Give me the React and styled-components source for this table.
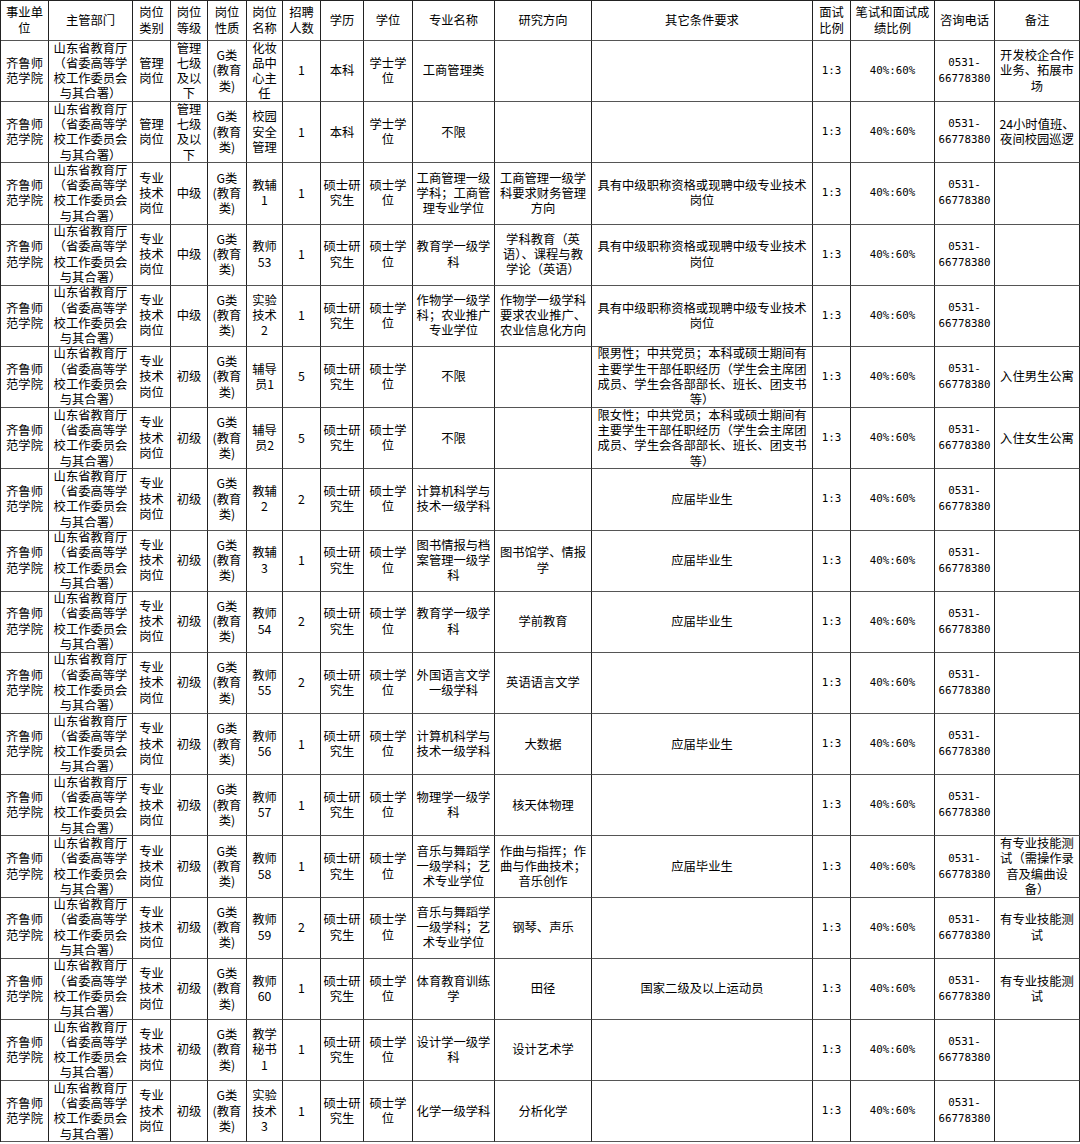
import React from 'react';
import styled, { createGlobalStyle, css } from 'styled-components';

const GlobalStyle = createGlobalStyle`
  html, body {
    margin: 0;
    padding: 0;
    background: #fff;
  }
`;

const Sheet = styled.div`
  width: 1080px;
  display: grid;
  grid-template-columns: 48px 84px 38px 37px 39px 36px 38px 43px 49px 82px 97px 221px 38px 84px 60px 85px;
  grid-template-rows: 40px;
  grid-auto-rows: 61.2px;
  border-top: 1px solid #222;
  border-left: 1px solid #222;
  font-family: "Noto Sans CJK SC", "Noto Sans", sans-serif;
  font-size: 12.3px;
  line-height: 15.3px;
  color: #000;
`;

const Cell = styled.div`
  box-sizing: border-box;
  display: flex;
  align-items: center;
  justify-content: center;
  text-align: center;
  white-space: pre-line;
  padding: 0 2px;
  border-right: 1px solid #222;
  border-bottom: 1px solid #555;
  overflow: visible;

  ${(props) => props.mono && css`
    padding: 0;
    font-family: "DejaVu Sans Mono", "Liberation Mono", monospace;
    font-size: 10.8px;
    line-height: 16px;
  `}
`;

const headers = [
  '事业单\n位', '主管部门', '岗位\n类别', '岗位\n等级', '岗位\n性质', '岗位\n名称', '招聘\n人数',
  '学历', '学位', '专业名称', '研究方向', '其它条件要求', '面试\n比例', '笔试和面试成\n绩比例', '咨询电话', '备注'
];

const UNIT = '齐鲁师\n范学院';
const DEPT = '山东省教育厅\n（省委高等学\n校工作委员会\n与其合署）';
const MGMT = '管理\n岗位';
const TECH = '专业\n技术\n岗位';
const SEVEN = '管理\n七级\n及以\n下';
const GTYPE = 'G类\n(教育\n类)';
const MASTER = '硕士研\n究生';
const MDEG = '硕士学\n位';
const PHONE = '0531-\n66778380';
const MID = '具有中级职称资格或现聘中级专业技术\n岗位';
const FRESH = '应届毕业生';

// level, name, count, degree, major, direction, other, note
const rows = [
  [MGMT, SEVEN, '化妆\n品中\n心主\n任', '1', '本科', '学士学\n位', '工商管理类', '', '', '开发校企合作\n业务、拓展市\n场'],
  [MGMT, SEVEN, '校园\n安全\n管理', '1', '本科', '学士学\n位', '不限', '', '', '24小时值班、\n夜间校园巡逻'],
  [TECH, '中级', '教辅\n1', '1', MASTER, MDEG, '工商管理一级\n学科；工商管\n理专业学位', '工商管理一级学\n科要求财务管理\n方向', MID, ''],
  [TECH, '中级', '教师\n53', '1', MASTER, MDEG, '教育学一级学\n科', '学科教育（英\n语）、课程与教\n学论（英语）', MID, ''],
  [TECH, '中级', '实验\n技术\n2', '1', MASTER, MDEG, '作物学一级学\n科；农业推广\n专业学位', '作物学一级学科\n要求农业推广、\n农业信息化方向', MID, ''],
  [TECH, '初级', '辅导\n员1', '5', MASTER, MDEG, '不限', '', '限男性；中共党员；本科或硕士期间有\n主要学生干部任职经历（学生会主席团\n成员、学生会各部部长、班长、团支书\n等）', '入住男生公寓'],
  [TECH, '初级', '辅导\n员2', '5', MASTER, MDEG, '不限', '', '限女性；中共党员；本科或硕士期间有\n主要学生干部任职经历（学生会主席团\n成员、学生会各部部长、班长、团支书\n等）', '入住女生公寓'],
  [TECH, '初级', '教辅\n2', '2', MASTER, MDEG, '计算机科学与\n技术一级学科', '', FRESH, ''],
  [TECH, '初级', '教辅\n3', '1', MASTER, MDEG, '图书情报与档\n案管理一级学\n科', '图书馆学、情报\n学', FRESH, ''],
  [TECH, '初级', '教师\n54', '2', MASTER, MDEG, '教育学一级学\n科', '学前教育', FRESH, ''],
  [TECH, '初级', '教师\n55', '2', MASTER, MDEG, '外国语言文学\n一级学科', '英语语言文学', '', ''],
  [TECH, '初级', '教师\n56', '1', MASTER, MDEG, '计算机科学与\n技术一级学科', '大数据', FRESH, ''],
  [TECH, '初级', '教师\n57', '1', MASTER, MDEG, '物理学一级学\n科', '核天体物理', '', ''],
  [TECH, '初级', '教师\n58', '1', MASTER, MDEG, '音乐与舞蹈学\n一级学科；艺\n术专业学位', '作曲与指挥；作\n曲与作曲技术；\n音乐创作', FRESH, '有专业技能测\n试（需操作录\n音及编曲设\n备）'],
  [TECH, '初级', '教师\n59', '2', MASTER, MDEG, '音乐与舞蹈学\n一级学科；艺\n术专业学位', '钢琴、声乐', '', '有专业技能测\n试'],
  [TECH, '初级', '教师\n60', '1', MASTER, MDEG, '体育教育训练\n学', '田径', '国家二级及以上运动员', '有专业技能测\n试'],
  [TECH, '初级', '教学\n秘书\n1', '1', MASTER, MDEG, '设计学一级学\n科', '设计艺术学', '', ''],
  [TECH, '初级', '实验\n技术\n3', '1', MASTER, MDEG, '化学一级学科', '分析化学', '', '']
];

function App() {
  return (
    <>
      <GlobalStyle />
      <Sheet>
        {headers.map((h) => (
          <Cell key={h}>{h}</Cell>
        ))}

        {rows.map((row, index) => {
          const [kind, level, name, count, edu, degree, major, direction, other, note] = row;
          const cells = [
            UNIT, DEPT, kind, level, GTYPE, name, count, edu, degree,
            major, direction, other, '1:3', '40%:60%', PHONE, note
          ];
          return cells.map((text, col) => (
            <Cell key={index + '-' + col} mono={col >= 12 && col <= 14}>
              {text}
            </Cell>
          ));
        })}
      </Sheet>
    </>
  );
}

export default App;
